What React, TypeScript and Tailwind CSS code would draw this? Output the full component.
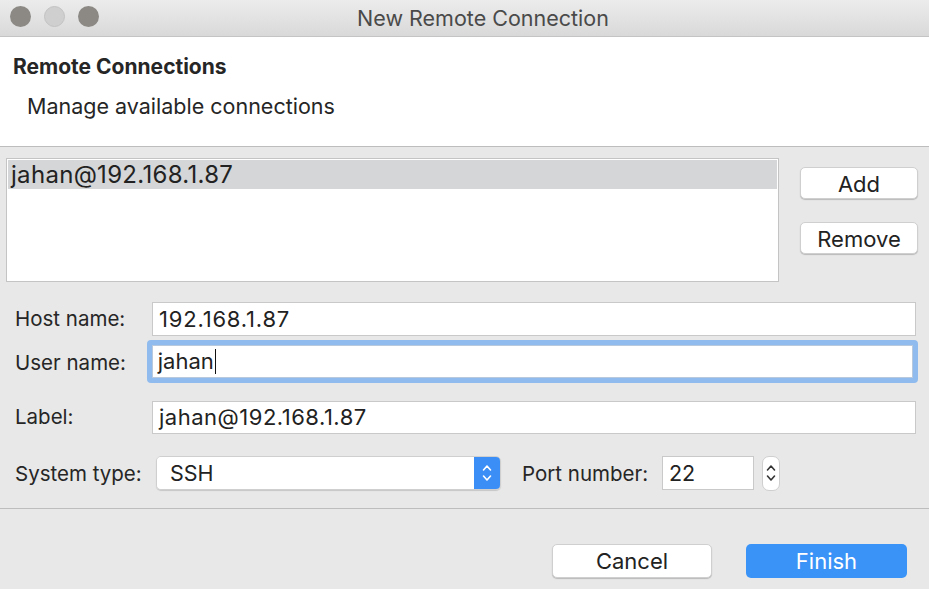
import React from "react";

const font = { fontFamily: 'Inter, "Liberation Sans", Arial, sans-serif' };

function Chevrons({ color = "#fff" }: { color?: string }) {
  return (
    <svg width="12" height="22" viewBox="0 0 12 22" fill="none" stroke={color} strokeWidth="1.6" strokeLinecap="round" strokeLinejoin="round">
      <path d="M2.5 8 L6 4 L9.5 8" />
      <path d="M2.5 14 L6 18 L9.5 14" />
    </svg>
  );
}

export default function App() {
  return (
    <div className="w-[929px] h-[589px] overflow-hidden bg-[#e8e8e8] text-[#222]" style={font}>
      {/* Title bar */}
      <div className="relative h-[37px] bg-gradient-to-b from-[#ececec] to-[#d9d9d9] border-b border-[#c4c4c4] flex items-center justify-center">
        <div className="absolute left-[10px] top-[6px] flex gap-[13px]">
          <div className="w-[21px] h-[21px] rounded-full bg-[#8c8985]" />
          <div className="w-[21px] h-[21px] rounded-full bg-[#cfcfcf] border border-[#c2c2c2]" />
          <div className="w-[21px] h-[21px] rounded-full bg-[#8c8985]" />
        </div>
        <span className="text-[21.5px] text-[#4a4a4a] ml-[37px]">New Remote Connection</span>
      </div>

      {/* Header */}
      <div className="h-[110px] bg-white border-b border-[#bdbdbd] pl-[13px] pt-[17px]">
        <div className="text-[21px] font-bold text-[#262626] leading-[26px]">Remote Connections</div>
        <div className="text-[21.5px] text-[#262626] pl-[14px] mt-[11px] leading-[30px]">Manage available connections</div>
      </div>

      {/* Body */}
      <div className="pl-[6px] pr-[11px] pt-[11px]">
        <div className="flex gap-[21px]">
          <div className="w-[773px] h-[124px] bg-white border border-[#c4c4c4] pt-[1px] px-[1px]">
            <div className="h-[29px] bg-[#d5d6d7] flex items-center pl-[3px] text-[24px] tracking-[0.3px] text-[#222]">jahan@192.168.1.87</div>
          </div>
          <div className="flex flex-col gap-[23px] pt-[9px]">
            <button className="w-[118px] h-[32px] bg-white rounded-[5px] border border-[#cfcfcf] shadow-[0_1px_1px_rgba(0,0,0,0.2)] text-[22px] text-[#222]">Add</button>
            <button className="w-[118px] h-[32px] bg-white rounded-[5px] border border-[#cfcfcf] shadow-[0_1px_1px_rgba(0,0,0,0.2)] text-[22px] text-[#222]">Remove</button>
          </div>
        </div>

        {/* Form */}
        <div className="mt-[20px] pl-[9px] flex flex-col">
          <div className="flex items-center h-[34px]">
            <div className="w-[137px] text-[20.5px] text-[#262626]">Host name:</div>
            <div className="w-[764px] h-[34px] bg-white border border-[#c9c9c9] flex items-center pl-[6px] text-[22px] tracking-[0.8px]">192.168.1.87</div>
          </div>
          <div className="flex items-center h-[43px] mt-[4px]">
            <div className="w-[132px] text-[20.5px] text-[#262626] pt-[3px]">User name:</div>
            <div className="w-[773px] h-[43px] rounded-[4px] bg-[#8fbbef] p-[5px]">
              <div className="h-full bg-white border border-[#b9c9dd] flex items-center pl-[5px] text-[22px]">
                jahan<span className="inline-block w-[1.5px] h-[25px] bg-[#111] ml-[1px]" />
              </div>
            </div>
          </div>
          <div className="flex items-center h-[34px] mt-[17px]">
            <div className="w-[137px] text-[20.5px] text-[#262626]">Label:</div>
            <div className="w-[764px] h-[33px] bg-white border border-[#c9c9c9] flex items-center pl-[6px] text-[22px] tracking-[0.5px]">jahan@192.168.1.87</div>
          </div>
          <div className="flex items-center h-[36px] mt-[21px]">
            <div className="w-[141px] text-[20.5px] text-[#262626] pt-[2px]">System type:</div>
            <div className="w-[345px] h-[34px] flex rounded-[5px] overflow-hidden border border-[#cfcfcf] shadow-[0_1px_1px_rgba(0,0,0,0.15)]">
              <div className="flex-1 bg-white flex items-center pl-[13px] text-[21.5px]">SSH</div>
              <div className="w-[26px] bg-[#3b8ef5] flex items-center justify-center">
                <Chevrons />
              </div>
            </div>
            <div className="ml-[21px] w-[140px] text-[20.5px] text-[#262626] pt-[2px]">Port number:</div>
            <div className="w-[92px] h-[34px] bg-white border border-[#c9c9c9] flex items-center pl-[6px] text-[21.5px]">22</div>
            <div className="ml-[8px] w-[18px] h-[35px] bg-white rounded-[7px] border border-[#cfcfcf] flex items-center justify-center">
              <Chevrons color="#333" />
            </div>
          </div>
        </div>
      </div>

      {/* Separator */}
      <div className="mt-[17px] border-t border-[#bdbdbd]" />

      {/* Footer */}
      <div className="flex justify-end pr-[22px] pt-[35px] gap-[34px]">
        <button className="w-[160px] h-[34px] bg-white rounded-[5px] border border-[#cfcfcf] shadow-[0_1px_1px_rgba(0,0,0,0.2)] text-[22px] text-[#222]">Cancel</button>
        <button className="w-[161px] h-[34px] bg-[#3a93f7] rounded-[5px] text-[22px] text-white">Finish</button>
      </div>
    </div>
  );
}
